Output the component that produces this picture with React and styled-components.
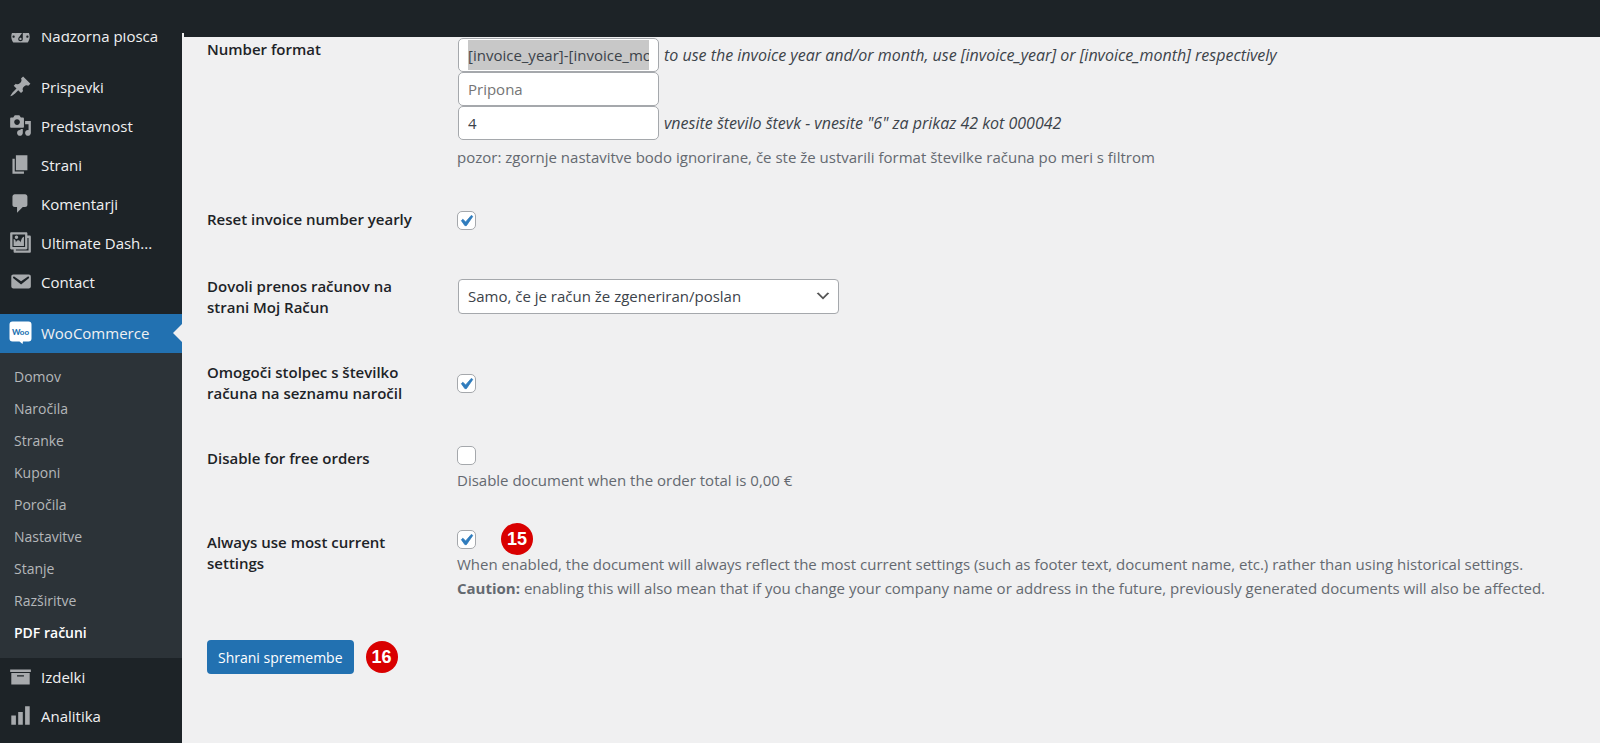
import React, { useEffect, useRef } from 'react'
import styled, { createGlobalStyle } from 'styled-components'

const icons = {
  dashboard: 'M3.76 16h12.48c1.1-1.37 1.76-3.11 1.76-5 0-4.42-3.58-8-8-8s-8 3.58-8 8c0 1.89.66 3.63 1.76 5zM10 4c.55 0 1 .45 1 1s-.45 1-1 1-1-.45-1-1 .45-1 1-1zM6 6c.55 0 1 .45 1 1s-.45 1-1 1-1-.45-1-1 .45-1 1-1zm8 0c.55 0 1 .45 1 1s-.45 1-1 1-1-.45-1-1 .45-1 1-1zm-5.37 5.55L12 7v6c0 1.1-.9 2-2 2s-2-.9-2-2c0-.57.24-1.08.63-1.45zM4 10c.55 0 1 .45 1 1s-.45 1-1 1-1-.45-1-1 .45-1 1-1zm12 0c.55 0 1 .45 1 1s-.45 1-1 1-1-.45-1-1 .45-1 1-1zm-5 3c0-.55-.45-1-1-1s-1 .45-1 1 .45 1 1 1 1-.45 1-1z',
  pin: 'M10.44 3.02l1.82-1.82 6.36 6.35-1.83 1.82c-1.05-.68-2.48-.57-3.41.36l-.75.75c-.92.93-1.04 2.35-.35 3.41l-1.83 1.82-2.41-2.41-2.8 2.79c-.42.42-3.38 2.71-3.8 2.29s1.86-3.39 2.28-3.81l2.79-2.79L4.1 9.36l1.83-1.82c1.05.69 2.48.57 3.4-.36l.75-.75c.93-.92 1.05-2.35.36-3.41z',
  media: 'M13 11V4c0-.55-.45-1-1-1h-1.67L9 1H5L3.67 3H2c-.55 0-1 .45-1 1v7c0 .55.45 1 1 1h10c.55 0 1-.45 1-1zM7 4.5c1.38 0 2.5 1.12 2.5 2.5S8.38 9.5 7 9.5 4.5 8.38 4.5 7 5.62 4.5 7 4.5zM14 6h5v10.5c0 1.38-1.12 2.5-2.5 2.5S14 17.88 14 16.5s1.12-2.5 2.5-2.5c.17 0 .34.02.5.05V9h-3V6zm-4 8.05V13h2v3.5c0 1.38-1.12 2.5-2.5 2.5S7 17.88 7 16.5 8.12 14 9.5 14c.17 0 .34.02.5.05z',
  page: 'M6 15V2h10v13H6zm-1 1h8v2H3V5h2v11z',
  comments: 'M5 2h9c1.1 0 2 .9 2 2v7c0 1.1-.9 2-2 2h-2l-5 5v-5H5c-1.1 0-2-.9-2-2V4c0-1.1.9-2 2-2z',
  gallery: 'M16 4h1.96c.57 0 1.04.47 1.04 1.04v12.92c0 .57-.47 1.04-1.04 1.04H5.04C4.47 19 4 18.53 4 17.96V16H2.04C1.47 16 1 15.53 1 14.96V2.04C1 1.47 1.47 1 2.04 1h12.92c.57 0 1.04.47 1.04 1.04V4zM3 14h11V3H3v11zm5-8.5C8 4.67 7.33 4 6.5 4S5 4.67 5 5.5 5.67 7 6.5 7 8 6.33 8 5.5zm2 4.5s1-5 3-5v8H4V7c2 0 2 3 2 3s.33-2 2-2 2 2 2 2zm7 7V6h-1v8.96c0 .57-.47 1.04-1.04 1.04H6v1h11z',
  email: 'M3.87 4h13.25C18.37 4 19 4.59 19 5.79v8.42c0 1.19-.63 1.79-1.88 1.79H3.87c-1.25 0-1.88-.6-1.88-1.79V5.79c0-1.2.63-1.79 1.88-1.79zm6.62 8.6l6.74-5.53c.24-.2.43-.66.13-1.07-.29-.41-.82-.42-1.17-.17l-5.7 3.86L4.8 5.83c-.35-.25-.88-.24-1.17.17-.3.41-.11.87.13 1.07z',
  archive: 'M19 4v2H1V4h18zM2 7h16v10H2V7zm11 3V9H7v1h6z',
  chart: 'M18 18V2h-4v16h4zm-6 0V7H8v11h4zm-6 0v-8H2v8h4z',
}

const contentMenu = [
  { icon: 'pin', label: 'Prispevki' },
  { icon: 'media', label: 'Predstavnost' },
  { icon: 'page', label: 'Strani' },
  { icon: 'comments', label: 'Komentarji' },
  { icon: 'gallery', label: 'Ultimate Dash...' },
  { icon: 'email', label: 'Contact' },
]

const shopMenu = ['Domov', 'Naročila', 'Stranke', 'Kuponi', 'Poročila', 'Nastavitve', 'Stanje', 'Razširitve', 'PDF računi']

function Icon({ name }) {
  return (
    <IconBox viewBox="0 0 20 20" aria-hidden="true">
      <path fillRule="evenodd" d={icons[name]} />
    </IconBox>
  )
}

function WooIcon() {
  return (
    <IconBox viewBox="0 0 23 23" aria-hidden="true">
      <path fill="#fff" d="M3.500 0.500h16q3 0 3 3v14q0 3-3 3h-5.500l-.5 2.500-3-2.500h-7q-3 0-3-3v-14q0-3 3-3z" />
      <text x="11.500" y="13.500" textAnchor="middle" fontFamily="Lato, sans-serif" fontWeight="900" fontSize="8" fill="#2271b1">Woo</text>
    </IconBox>
  )
}

function MenuItem({ icon, label }) {
  return (
    <li>
      <MenuLink href="#">
        <Icon name={icon} />
        {label}
      </MenuLink>
    </li>
  )
}

function SideBar() {
  return (
    <Aside>
      <MenuList>
        <MenuItem icon="dashboard" label="Nadzorna plošča" />
      </MenuList>
      <MenuList>
        {contentMenu.map((item) => (
          <MenuItem key={item.label} {...item} />
        ))}
      </MenuList>
      <MenuList>
        <li>
          <MenuLink href="#" $current>
            <WooIcon />
            WooCommerce
          </MenuLink>
          <SubMenu>
            {shopMenu.map((label) => (
              <li key={label}>
                <SubLink href="#" $current={label === 'PDF računi'}>{label}</SubLink>
              </li>
            ))}
          </SubMenu>
        </li>
        <MenuItem icon="archive" label="Izdelki" />
        <MenuItem icon="chart" label="Analitika" />
      </MenuList>
    </Aside>
  )
}

function App() {
  const prefix = useRef(null)

  useEffect(() => {
    prefix.current.focus({ preventScroll: true })
    prefix.current.select()
  }, [])

  return (
    <>
      <GlobalStyle />
      <TopBar />
      <Page>
        <SideBar />
        <Main>
          <Strip />
          <Form onSubmit={(e) => e.preventDefault()}>
            <Row $first>
              <Label htmlFor="prefix" $first>Number format</Label>
              <Cell>
                <Field>
                  <TextInput id="prefix" ref={prefix} $selected defaultValue="[invoice_year]-[invoice_month]-" />
                  <Hint>to use the invoice year and/or month, use [invoice_year] or [invoice_month] respectively</Hint>
                </Field>
                <Field>
                  <TextInput aria-label="Pripona" placeholder="Pripona" />
                </Field>
                <Field>
                  <TextInput aria-label="Število števk" defaultValue="4" />
                  <Hint>vnesite število števk - vnesite "6" za prikaz 42 kot 000042</Hint>
                </Field>
                <Description $spaced>
                  pozor: zgornje nastavitve bodo ignorirane, če ste že ustvarili format številke računa po meri s filtrom
                </Description>
              </Cell>
            </Row>

            <Row>
              <Label htmlFor="reset">Reset invoice number yearly</Label>
              <Cell>
                <CheckLine $alone><Checkbox id="reset" defaultChecked /></CheckLine>
              </Cell>
            </Row>

            <Row>
              <Label htmlFor="download">Dovoli prenos računov na strani Moj Račun</Label>
              <Cell>
                <Select id="download">
                  <option>Samo, če je račun že zgeneriran/poslan</option>
                </Select>
              </Cell>
            </Row>

            <Row>
              <Label htmlFor="column">Omogoči stolpec s številko računa na seznamu naročil</Label>
              <Cell>
                <CheckLine $alone><Checkbox id="column" defaultChecked /></CheckLine>
              </Cell>
            </Row>

            <Row>
              <Label htmlFor="free">Disable for free orders</Label>
              <Cell>
                <CheckLine><Checkbox id="free" /></CheckLine>
                <Description>Disable document when the order total is 0,00 €</Description>
              </Cell>
            </Row>

            <Row>
              <Label htmlFor="latest">Always use most current settings</Label>
              <Cell>
                <CheckLine>
                  <Checkbox id="latest" defaultChecked />
                  <Marker $floating>15</Marker>
                </CheckLine>
                <Description>
                  When enabled, the document will always reflect the most current settings (such as footer text, document name, etc.) rather than using historical settings.
                  <br />
                  <strong>Caution:</strong> enabling this will also mean that if you change your company name or address in the future, previously generated documents will also be affected.
                </Description>
              </Cell>
            </Row>

            <Actions>
              <SaveButton type="submit">Shrani spremembe</SaveButton>
              <Marker>16</Marker>
            </Actions>
          </Form>
        </Main>
      </Page>
    </>
  )
}

const GlobalStyle = createGlobalStyle`
* {
  box-sizing: border-box;
}
body {
  margin: 0;
  background: #f0f0f1;
  color: #3c434a;
  font-family: "Segoe UI", "Open Sans", "Noto Sans", sans-serif;
  font-size: 15px;
}
input, select, button {
  font: inherit;
}
`

const TopBar = styled.header`
  position: fixed;
  z-index: 2;
  top: 0;
  left: 0;
  right: 0;
  height: 33px;
  background: #1d2327;
`

const Page = styled.div`
  display: flex;
  height: 100vh;
  overflow: hidden;
`

const Aside = styled.nav`
  flex: none;
  display: flex;
  flex-direction: column;
  gap: 12px;
  width: 182px;
  padding-top: 17px;
  background: #1d2327;
`

const MenuList = styled.ul`
  margin: 0;
  padding: 0;
  list-style: none;
`

const MenuLink = styled.a`
  position: relative;
  display: flex;
  align-items: center;
  gap: 9px;
  height: 39px;
  padding: 0 0 2px 9px;
  color: #f0f0f1;
  background: ${(p) => (p.$current ? '#2271b1' : 'transparent')};
  text-decoration: none;
  white-space: nowrap;

  &::after {
    content: ${(p) => (p.$current ? '""' : 'none')};
    position: absolute;
    right: 0;
    border: 9px solid transparent;
    border-right-color: #f0f0f1;
    border-left-width: 0;
  }
`

const IconBox = styled.svg`
  flex: none;
  width: 23px;
  height: 23px;
  fill: #a7aaad;
`

const SubMenu = styled.ul`
  margin: 0;
  padding: 8px 0 9px;
  background: #2c3338;
  list-style: none;
`

const SubLink = styled.a`
  display: block;
  padding-left: 14px;
  color: ${(p) => (p.$current ? '#fff' : '#b4b7ba')};
  font-size: 14px;
  font-weight: ${(p) => (p.$current ? 600 : 400)};
  line-height: 32px;
  text-decoration: none;
`

const Main = styled.main`
  flex: 1;
  min-width: 0;
  padding-top: 33px;
`

const Strip = styled.div`
  height: 4px;
  margin-left: 2px;
  background: #1d2327;
`

const Form = styled.form`
  padding: 0 25px;
`

const Row = styled.div`
  display: grid;
  grid-template-columns: 250px 1fr;
  padding: ${(p) => (p.$first ? '1px 0 18px' : '18px 0')};
`

const Label = styled.label`
  width: 212px;
  padding: ${(p) => (p.$first ? '1px 0' : '4px 0')};
  color: #1d2327;
  font-weight: 600;
  line-height: 21px;
`

const Cell = styled.div`
  align-self: center;
  min-width: 0;
`

const Field = styled.div`
  display: flex;
  align-items: center;
  gap: 5px;
  height: 34px;
`

const TextInput = styled.input.attrs({ type: 'text' })`
  width: 201px;
  height: 34px;
  margin-left: 1px;
  padding: 1px 9px;
  border: 1px solid #a5a8ac;
  border-radius: 5px;
  outline: none;
  background: ${(p) => (p.$selected ? 'linear-gradient(#c8c8c8, #c8c8c8) content-box, #fff' : '#fff')};
  color: #3c434a;

  &::placeholder {
    color: #757575;
  }
  &::selection {
    background: #c8c8c8;
    color: #3c434a;
  }
`

const Hint = styled.i`
  font-size: 16px;
  white-space: nowrap;
`

const Description = styled.p`
  margin: ${(p) => (p.$spaced ? '5px 0 0' : 0)};
  color: #646970;
  line-height: 24px;
`

const CheckLine = styled.div`
  position: relative;
  display: flex;
  align-items: center;
  height: ${(p) => (p.$alone ? '31px' : '22px')};
  margin-bottom: ${(p) => (p.$alone ? 0 : '2px')};
`

const Checkbox = styled.input.attrs({ type: 'checkbox' })`
  appearance: none;
  width: 19px;
  height: 19px;
  margin: 0;
  border: 1px solid #a5a8ac;
  border-radius: 5px;
  background: #fff;

  &:checked {
    background: #fff url("data:image/svg+xml,%3Csvg xmlns='http://www.w3.org/2000/svg' viewBox='0 0 20 20'%3E%3Cpath fill='%232f7cbd' stroke='%232f7cbd' stroke-width='.7' d='M14.830 4.890l1.340.940-5.810 8.380H9.020L5.780 9.670l1.340-1.250 2.570 2.400z'/%3E%3C/svg%3E") -3px -2px / 22px no-repeat;
  }
`

const Select = styled.select`
  appearance: none;
  display: block;
  width: 381px;
  max-width: 100%;
  height: 35px;
  margin: 0 0 2px 1px;
  padding: 0 28px 0 9px;
  border: 1px solid #a5a8ac;
  border-radius: 4px;
  background: #fff url("data:image/svg+xml,%3Csvg xmlns='http://www.w3.org/2000/svg' viewBox='0 0 20 20'%3E%3Cpath fill='%23555' d='M5 6l5 5 5-5 2 1-7 7-7-7 2-1z'/%3E%3C/svg%3E") right 6px center / 18px no-repeat;
  color: #3c434a;
`

const Marker = styled.span`
  position: ${(p) => (p.$floating ? 'absolute' : 'static')};
  left: 44px;
  width: 32px;
  height: 32px;
  border-radius: 50%;
  background: #d90000;
  color: #fff;
  font-family: "Liberation Sans", Arial, sans-serif;
  font-size: 18px;
  font-weight: 700;
  line-height: 32px;
  text-align: center;
`

const Actions = styled.div`
  display: flex;
  align-items: center;
  gap: 12px;
  margin-top: 22px;
`

const SaveButton = styled.button`
  height: 34px;
  padding: 0 11px;
  border: 0;
  border-radius: 4px;
  background: #2271b1;
  color: #fff;
  font-size: 14px;
`

export default App
